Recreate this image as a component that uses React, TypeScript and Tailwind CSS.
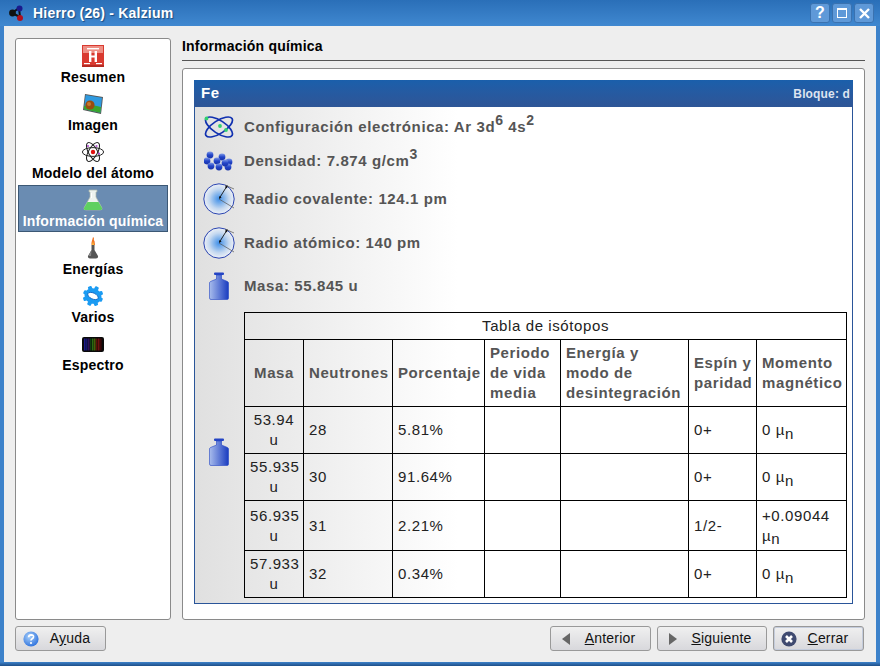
import type { ReactNode } from 'react';

function KalziumLogo() {
  return (
    <svg width="18" height="18" viewBox="0 0 18 18">
      <path d="M4 9 L11 4 M4 9 L12 13 M11 4 L12 13" stroke="#111" strokeWidth="2" />
      <circle cx="4.5" cy="9" r="3.4" fill="#111" />
      <circle cx="11.5" cy="4.5" r="3" fill="#1a1a8c" />
      <circle cx="12" cy="14" r="3" fill="#b01020" />
    </svg>
  );
}

function HIcon() {
  return (
    <svg width="22" height="22" viewBox="0 0 22 22">
      <rect width="22" height="22" fill="#d93a30" />
      <rect x="1" y="1" width="20" height="7" fill="#ee8f85" />
      <rect y="20" width="22" height="2" fill="#b52a22" />
      <rect x="5" y="3" width="12" height="1.4" fill="#fff" />
      <rect x="7" y="6" width="2.4" height="11" fill="#fff" />
      <rect x="12.6" y="6" width="2.4" height="11" fill="#fff" />
      <rect x="7" y="10.5" width="8" height="2" fill="#fff" />
      <rect x="2" y="18" width="6" height="1.2" fill="#fff" />
      <rect x="14" y="18" width="6" height="1.2" fill="#fff" />
    </svg>
  );
}

function ImageIcon() {
  return (
    <svg width="22" height="22" viewBox="0 0 22 22">
      <path d="M3 1 L21 4 L19 21 L1 17 Z" fill="#555" />
      <path d="M3.6 2 L20 4.7 L18.4 19.8 L2 16.3 Z" fill="#2f9ae0" />
      <path d="M2 13 Q10 11 19 14 L18.4 19.8 L2 16.3 Z" fill="#3aa52e" />
      <circle cx="8" cy="12" r="4.6" fill="#9a4c10" />
      <circle cx="7" cy="11" r="2" fill="#c67a30" />
    </svg>
  );
}

function AtomIcon() {
  return (
    <svg width="22" height="22" viewBox="0 0 22 22" fill="none" stroke="#222" strokeWidth="1">
      <ellipse cx="11" cy="11" rx="10.6" ry="4.4" />
      <ellipse cx="11" cy="11" rx="10.6" ry="4.4" transform="rotate(60 11 11)" />
      <ellipse cx="11" cy="11" rx="10.6" ry="4.4" transform="rotate(120 11 11)" />
      <circle cx="11" cy="11" r="2.2" fill="#e01010" stroke="none" />
      <circle cx="14.5" cy="5" r="1.1" fill="#b050d0" stroke="none" />
      <circle cx="17" cy="12.5" r="1.1" fill="#b050d0" stroke="none" />
      <circle cx="6" cy="5" r="1.1" fill="#b050d0" stroke="none" />
    </svg>
  );
}

function FlaskIcon() {
  return (
    <svg width="22" height="22" viewBox="0 0 22 22">
      <path d="M7 1 H15 V3 H14 V8 L20 19 Q20.5 21 18 21 H4 Q1.5 21 2 19 L8 8 V3 H7 Z" fill="#eef3ee" stroke="#a9b5a9" strokeWidth="0.7" />
      <path d="M5.5 13 H16.5 L20 19 Q20.5 21 18 21 H4 Q1.5 21 2 19 Z" fill="#5fd060" />
      <path d="M9 4 H10 V9 H9 Z" fill="#fff" />
    </svg>
  );
}

function BurnerIcon() {
  return (
    <svg width="22" height="22" viewBox="0 0 22 22">
      <path d="M11 0 C13 1 11 3 12.5 4 L13 8 H9.5 C9 5 10.5 3 11 0 Z" fill="#f07020" />
      <path d="M11 4 L12 8 H10 Z" fill="#f9c040" />
      <path d="M9.5 8 H12.5 V13 L16 19 Q16.5 21.5 14 21.5 H8 Q5.5 21.5 6 19 L9.5 13 Z" fill="#555" />
      <path d="M9.5 13 L6.5 19 H9 Z" fill="#888" />
    </svg>
  );
}

function GearIcon() {
  return (
    <svg width="22" height="22" viewBox="0 0 22 22">
      <g transform="rotate(25 11 11)">
        <ellipse cx="11" cy="11" rx="8.6" ry="7.6" fill="#1b9bf2" />
        {[0, 45, 90, 135, 180, 225, 270, 315].map((a) => (
          <rect key={a} x="9" y="0.8" width="4" height="4.2" rx="1" fill="#1b9bf2" transform={`rotate(${a} 11 11)`} />
        ))}
        <ellipse cx="11" cy="11" rx="5.6" ry="3" fill="#fff" />
        <ellipse cx="11" cy="11" rx="5.6" ry="3" fill="none" stroke="#0c62c0" strokeWidth="0.8" />
      </g>
    </svg>
  );
}

function SpectrumIcon() {
  const bars = ['#1a1a8a', '#14146a', '#2d0f5a', '#0d3d10', '#2b6a10', '#4b5a08', '#5a1008', '#701010', '#3a0808'];
  return (
    <svg width="22" height="15" viewBox="0 0 22 15">
      <rect width="22" height="15" rx="2" fill="#0a0a0a" />
      {bars.map((c, i) => (
        <rect key={i} x={2 + i * 2} y="1.5" width="1.6" height="12" fill={c} />
      ))}
    </svg>
  );
}

function OrbitIcon() {
  return (
    <svg width="30" height="24" viewBox="0 0 30 24" fill="none" stroke="#1030b0" strokeWidth="1.7">
      <ellipse cx="15" cy="12" rx="15.5" ry="6.4" transform="rotate(33 15 12)" />
      <ellipse cx="15" cy="12" rx="15.5" ry="6.4" transform="rotate(-33 15 12)" />
      <circle cx="2.5" cy="3.5" r="1.9" fill="#30d070" stroke="none" />
      <circle cx="16" cy="11" r="1.9" fill="#30d070" stroke="none" />
      <circle cx="22" cy="15" r="1.9" fill="#30d070" stroke="none" />
    </svg>
  );
}

function SpheresIcon() {
  const pts = [[6, 4], [18, 6], [3, 10], [13, 10], [25, 11], [7, 15], [15, 16], [24, 16], [21, 12]];
  return (
    <svg width="30" height="21" viewBox="0 0 30 21">
      <defs>
        <linearGradient id="sph" x1="0" y1="0" x2="0" y2="1">
          <stop offset="0" stopColor="#7f9ae8" />
          <stop offset="0.5" stopColor="#2244c8" />
          <stop offset="1" stopColor="#1a34a8" />
        </linearGradient>
      </defs>
      {pts.map(([x, y], i) => (
        <circle key={i} cx={x} cy={y} r="3.4" fill="url(#sph)" />
      ))}
    </svg>
  );
}

function RadiusIcon() {
  return (
    <svg width="32" height="32" viewBox="0 0 32 32" fill="none">
      <defs>
        <radialGradient id="rad" cx="0.5" cy="0.5" r="0.5">
          <stop offset="0" stopColor="#3f8fe8" />
          <stop offset="0.65" stopColor="#c4d8f0" />
          <stop offset="1" stopColor="#eef1f6" />
        </radialGradient>
      </defs>
      <circle cx="16" cy="16" r="15.2" fill="url(#rad)" stroke="#2a44b0" strokeWidth="1" />
      <path d="M16 16 L31 25 M22 2 L31 6" stroke="#555" strokeWidth="0.7" />
      <path d="M16.5 15 L24 3" stroke="#111" strokeWidth="0.9" />
      <path d="M24.5 2 L21.8 4 L24 5.5 Z M16 16 L16.4 13 L18.6 14.5 Z" fill="#111" />
    </svg>
  );
}

function WeightIcon() {
  return (
    <svg width="20" height="28" viewBox="0 0 20 28">
      <defs>
        <linearGradient id="wgt" x1="0" y1="0" x2="1" y2="0">
          <stop offset="0" stopColor="#a8bcec" />
          <stop offset="1" stopColor="#1a3cc0" />
        </linearGradient>
      </defs>
      <rect x="5" y="0.5" width="10" height="2.5" rx="1" fill="#2444c4" />
      <path d="M7.5 3 H12.5 V7 L18.5 9.5 Q19.5 10 19.5 11 V26 Q19.5 27.5 18 27.5 H2 Q0.5 27.5 0.5 26 V11 Q0.5 10 1.5 9.5 L7.5 7 Z" fill="url(#wgt)" stroke="#2444c4" strokeWidth="0.6" />
    </svg>
  );
}

function HelpIcon() {
  return (
    <svg width="16" height="16" viewBox="0 0 16 16">
      <defs>
        <radialGradient id="hlp" cx="0.4" cy="0.35" r="0.7">
          <stop offset="0" stopColor="#a9d0fa" />
          <stop offset="1" stopColor="#2a6fdc" />
        </radialGradient>
      </defs>
      <circle cx="8" cy="8" r="7.6" fill="url(#hlp)" />
      <path d="M5.6 6.2 Q5.8 3.8 8.2 3.8 Q10.6 3.9 10.5 5.9 Q10.4 7.2 8.9 8 Q8 8.5 8 9.6" fill="none" stroke="#fff" strokeWidth="1.7" />
      <circle cx="8" cy="12" r="1.1" fill="#fff" />
    </svg>
  );
}

function CloseIcon() {
  return (
    <svg width="16" height="16" viewBox="0 0 16 16">
      <circle cx="8" cy="8" r="7.6" fill="#3f4a70" />
      <path d="M5 5 L11 11 M11 5 L5 11" stroke="#fff" strokeWidth="2.6" />
    </svg>
  );
}

function WinButton({ children }: { children: ReactNode }) {
  return (
    <div className="flex h-[20px] w-[20px] items-center justify-center rounded-[3px] border border-[#3a72b0] bg-[#5f99d8] text-[16px] font-bold text-white">
      {children}
    </div>
  );
}

function NavItem({ icon, label, active }: { icon: ReactNode; label: string; active?: boolean }) {
  return (
    <div
      className={
        active
          ? 'mb-[1px] flex h-[47px] flex-col items-center border border-[#3c5875] bg-[#6a8cb2] pt-[3px] text-[14px] leading-[18px] font-bold tracking-[0.2px] text-white'
          : 'flex h-[48px] flex-col items-center pt-[4px] text-[14px] leading-[18px] font-bold tracking-[0.2px] text-black'
      }
    >
      <div className="flex h-[22px] w-[22px] items-center justify-center">{icon}</div>
      <div className="mt-[1px]">{label}</div>
    </div>
  );
}

function InfoRow({ icon, h, children }: { icon: ReactNode; h: string; children: ReactNode }) {
  return (
    <div className={`flex items-center ${h}`}>
      <div className="flex w-[49px] justify-center pr-[2px]">{icon}</div>
      <div className="text-[15px] leading-[20px] font-bold tracking-[0.6px] text-[#555555]">{children}</div>
    </div>
  );
}

function Btn({ icon, w, focus, children }: { icon: ReactNode; w: string; focus?: boolean; children: ReactNode }) {
  return (
    <div
      className={`flex h-[25px] items-center rounded-[3px] border bg-gradient-to-b from-[#f0f0f0] to-[#d8d8dc] pl-[7px] text-[14px] tracking-[0.2px] text-[#111111] ${w} ${
        focus ? 'border-[#999999] shadow-[inset_0_0_0_1px_#c4ccdc]' : 'border-[#999999]'
      }`}
    >
      <div className="flex w-[16px] justify-center">{icon}</div>
      <div className="flex-1 pr-[4px] text-center">{children}</div>
    </div>
  );
}

const th = 'border border-black pl-[5px] align-middle font-bold text-[#555555] leading-[20px]';
const td = 'border border-black px-[5px] align-middle text-[#222222] leading-[20px]';

const rows = [
  { masa: '53.94', n: '28', p: '5.81%', spin: '0+', mom: '0', h: 'h-[47px]' },
  { masa: '55.935', n: '30', p: '91.64%', spin: '0+', mom: '0', h: 'h-[47px]' },
  { masa: '56.935', n: '31', p: '2.21%', spin: '1/2-', mom: '+0.09044', h: 'h-[50px]' },
  { masa: '57.933', n: '32', p: '0.34%', spin: '0+', mom: '0', h: 'h-[47px]' },
];

function IsotopeTable() {
  return (
    <table className="w-[602px] table-fixed border-collapse text-[15px] tracking-[0.6px]">
      <colgroup>
        <col className="w-[59px]" />
        <col className="w-[89px]" />
        <col className="w-[92px]" />
        <col className="w-[76px]" />
        <col className="w-[128px]" />
        <col className="w-[68px]" />
        <col className="w-[90px]" />
      </colgroup>
      <tbody>
        <tr className="h-[27px]">
          <td colSpan={7} className="border border-black text-center align-middle text-[#222222]">
            Tabla de isótopos
          </td>
        </tr>
        <tr className="h-[67px]">
          <th className={`${th} pr-[5px] text-center`}>Masa</th>
          <th className={`${th} text-left`}>Neutrones</th>
          <th className={`${th} text-left`}>Porcentaje</th>
          <th className={`${th} text-left`}>
            Periodo
            <br />
            de vida
            <br />
            media
          </th>
          <th className={`${th} text-left`}>
            Energía y
            <br />
            modo de
            <br />
            desintegración
          </th>
          <th className={`${th} text-left`}>
            Espín y
            <br />
            paridad
          </th>
          <th className={`${th} text-left`}>
            Momento
            <br />
            magnético
          </th>
        </tr>
        {rows.map((r) => (
          <tr key={r.masa} className={r.h}>
            <td className={`${td} px-[3px] text-center`}>
              {r.masa}
              <br />u
            </td>
            <td className={td}>{r.n}</td>
            <td className={td}>{r.p}</td>
            <td className={td}></td>
            <td className={td}></td>
            <td className={td}>{r.spin}</td>
            <td className={td}>
              {r.mom} {r.mom.length > 1 ? <br /> : null}µ<sub className="text-[15px] leading-none">n</sub>
            </td>
          </tr>
        ))}
      </tbody>
    </table>
  );
}

export default function App() {
  return (
    <div className="flex h-[666px] w-[880px] flex-col overflow-hidden bg-[#3d82ca] font-['Liberation_Sans',sans-serif]">
      <div className="flex h-[26px] items-center bg-gradient-to-b from-[#2a6fb8] to-[#4088d0] pr-[6px] pl-[8px]">
        <KalziumLogo />
        <div className="ml-[7px] flex-1 text-[14px] font-bold tracking-[0.2px] text-white [text-shadow:1px_1px_1px_#1c4c80]">
          Hierro (26) - Kalzium
        </div>
        <div className="flex gap-[2px]">
          <WinButton>?</WinButton>
          <WinButton>
            <svg width="10" height="10" viewBox="0 0 10 10" fill="none" stroke="#fff">
              <rect x="0.5" y="0.5" width="9" height="9" />
              <path d="M0 1 H10" strokeWidth="2" />
            </svg>
          </WinButton>
          <WinButton>
            <svg width="11" height="11" viewBox="0 0 11 11" stroke="#fff" strokeWidth="2.4">
              <path d="M1 1 L10 10 M10 1 L1 10" />
            </svg>
          </WinButton>
        </div>
      </div>

      <div className="mx-[4px] flex min-h-0 flex-1 flex-col bg-[#eeeeee] px-[11px] pt-[12px]">
        <div className="flex h-[582px] gap-[11px]">
          <div className="w-[156px] rounded-[3px] border border-[#8a8a8a] bg-white p-[2px]">
            <NavItem icon={<HIcon />} label="Resumen" />
            <NavItem icon={<ImageIcon />} label="Imagen" />
            <NavItem icon={<AtomIcon />} label="Modelo del átomo" />
            <NavItem icon={<FlaskIcon />} label="Información química" active />
            <NavItem icon={<BurnerIcon />} label="Energías" />
            <NavItem icon={<GearIcon />} label="Varios" />
            <NavItem icon={<SpectrumIcon />} label="Espectro" />
          </div>

          <div className="flex w-[683px] flex-col">
            <div className="h-[23px] border-b border-[#555555] text-[14px] leading-[16px] font-bold tracking-[0.2px] text-black">
              Información química
            </div>
            <div className="mt-[7px] flex-1 rounded-[3px] border border-[#8a8a8a] bg-white p-[11px]">
              <div className="h-[524px] w-[659px] border-x border-b border-[#2a5599] bg-gradient-to-r from-[#e0e0e0] to-white to-[40%]">
                <div className="-mx-[1px] flex h-[27px] items-center justify-between bg-gradient-to-b from-[#1a5fab] to-[#2e5596] pr-[3px] pl-[7px] font-bold">
                  <span className="text-[15px] tracking-[0.6px] text-white">Fe</span>
                  <span className="text-[12px] tracking-[0.15px] text-[#dde4f0]">Bloque: d</span>
                </div>
                <InfoRow icon={<OrbitIcon />} h="h-[39px]">
                  Configuración electrónica: Ar 3d<sup className="text-[14px]">6</sup> 4s<sup className="text-[14px]">2</sup>
                </InfoRow>
                <InfoRow icon={<SpheresIcon />} h="h-[30px]">
                  Densidad: 7.874 g/cm<sup className="text-[14px]">3</sup>
                </InfoRow>
                <InfoRow icon={<RadiusIcon />} h="h-[45px]">
                  Radio covalente: 124.1 pm
                </InfoRow>
                <InfoRow icon={<RadiusIcon />} h="h-[43px]">
                  Radio atómico: 140 pm
                </InfoRow>
                <InfoRow icon={<WeightIcon />} h="h-[44px]">
                  Masa: 55.845 u
                </InfoRow>
                <div className="mt-[4px] flex items-center">
                  <div className="flex w-[49px] justify-center pr-[2px] pb-[6px]">
                    <WeightIcon />
                  </div>
                  <IsotopeTable />
                </div>
              </div>
            </div>
          </div>
        </div>

        <div className="mt-[6px] flex items-start justify-between pr-[1px]">
          <Btn icon={<HelpIcon />} w="w-[91px]">
            A<span className="underline">y</span>uda
          </Btn>
          <div className="flex gap-[6px]">
            <Btn
              icon={
                <svg width="8" height="12" viewBox="0 0 8 12">
                  <path d="M8 0 V12 L0 6 Z" fill="#666" />
                </svg>
              }
              w="w-[101px]"
            >
              <span className="underline">A</span>nterior
            </Btn>
            <Btn
              icon={
                <svg width="8" height="12" viewBox="0 0 8 12">
                  <path d="M0 0 V12 L8 6 Z" fill="#666" />
                </svg>
              }
              w="w-[110px]"
            >
              <span className="underline">S</span>iguiente
            </Btn>
            <Btn icon={<CloseIcon />} w="w-[91px]" focus>
              <span className="underline">C</span>errar
            </Btn>
          </div>
        </div>
      </div>
      <div className="h-[4px] bg-gradient-to-b from-[#3d82ca] to-[#1f4f88]" />
    </div>
  );
}
